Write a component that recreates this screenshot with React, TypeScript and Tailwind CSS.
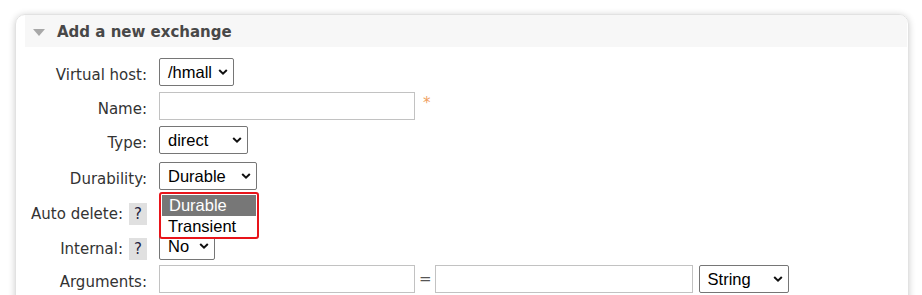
import React from 'react';

const labelFont = "font-['DejaVu_Sans',sans-serif] text-[15px] text-[#333]";
const ctrlFont = "font-['Liberation_Sans',Arial,sans-serif] text-[16.5px] text-black";

function Chevron() {
	return (
		<svg
			className="absolute right-[5px] top-1/2 -translate-y-1/2"
			width="10"
			height="7"
			viewBox="0 0 10 7"
		>
			<path d="M1.2 1.5 L5 5.2 L8.8 1.5" fill="none" stroke="#111" strokeWidth="2" />
		</svg>
	);
}

function Select({ value, width }: { value: string; width: string }) {
	return (
		<div
			className={`relative flex h-[28px] items-center rounded-[2px] border border-[#767676] bg-white pl-[8px] ${width} ${ctrlFont}`}
		>
			<span className="leading-none">{value}</span>
			<Chevron />
		</div>
	);
}

function TextInput({ width }: { width: string }) {
	return <div className={`h-[28px] border border-[#c2c2c2] bg-white ${width}`}></div>;
}

function Help() {
	return (
		<div
			className={`ml-[6px] flex h-[22px] w-[18px] items-center justify-center self-end bg-[#e0e0e0] font-['DejaVu_Sans',sans-serif] text-[15px] text-[#1e2340]`}
		>
			?
		</div>
	);
}

function Row({
	label,
	help,
	top,
	children,
}: {
	label: string;
	help?: boolean;
	top: string;
	children: React.ReactNode;
}) {
	return (
		<div className={`flex h-[28px] ${top}`}>
			<div className="flex w-[122px] items-center justify-end">
				<span className={`pt-[7px] leading-none whitespace-nowrap ${labelFont}`}>{label}</span>
				{help && <Help />}
			</div>
			<div className="ml-[12px] flex items-center">{children}</div>
		</div>
	);
}

export default function App() {
	return (
		<div className="h-[295px] w-[922px] overflow-hidden bg-white pt-[14px] pl-[15px] pr-[13px]">
			<div className="h-[300px] overflow-hidden rounded-[10px] border border-[#e2e2e2] pl-[9px] pr-[1px] shadow-[0_1px_7px_rgba(0,0,0,0.2)]">
				<div className="flex h-[32px] items-center bg-[#f7f7f7] pl-[8px]">
					<svg width="12" height="7" viewBox="0 0 12 7" className="mt-[2px]">
						<path d="M0 0 L12 0 L6 7 Z" fill="#a8a8a8" />
					</svg>
					<span className="ml-[12px] pt-[3px] font-['DejaVu_Sans',sans-serif] text-[15px] font-bold text-[#484848]">
						Add a new exchange
					</span>
				</div>

				<div className="mt-[11px]">
					<Row label="Virtual host:" top="">
						<Select value="/hmall" width="w-[75px]" />
					</Row>
					<Row label="Name:" top="mt-[6px]">
						<TextInput width="w-[256px]" />
						<span className="ml-[8px] -mt-[6px] font-['DejaVu_Sans',sans-serif] text-[15px] text-[#f0a060]">
							*
						</span>
					</Row>
					<Row label="Type:" top="mt-[6px]">
						<Select value="direct" width="w-[89px]" />
					</Row>
					<Row label="Durability:" top="mt-[8px]">
						<div className="relative">
							<Select value="Durable" width="w-[98px]" />
							<div
								className={`absolute left-0 top-[30px] z-10 w-[100px] rounded-[3px] border-2 border-[#e8141a] bg-white p-[1px] ${ctrlFont}`}
							>
								<div className="flex h-[21px] items-center bg-[#777777] pl-[7px] text-white">
									Durable
								</div>
								<div className="flex h-[20px] items-center pl-[6px]">Transient</div>
							</div>
						</div>
					</Row>
					<Row label="Auto delete:" help top="mt-[7px]">
						{/* select sits under the open dropdown */}
						<div className="h-[28px] w-[56px] rounded-[2px] border border-[#767676] bg-white"></div>
					</Row>
					<Row label="Internal:" help top="mt-[7px]">
						<Select value="No" width="w-[56px]" />
					</Row>
					<Row label="Arguments:" top="mt-[5px]">
						<TextInput width="w-[256px]" />
						<span className="ml-[4px] mr-[3px] font-['DejaVu_Sans',sans-serif] text-[15px] text-[#555]">=</span>
						<TextInput width="w-[258px]" />
						<div className="ml-[6px]">
							<Select value="String" width="w-[90px]" />
						</div>
					</Row>
				</div>
			</div>
		</div>
	);
}
